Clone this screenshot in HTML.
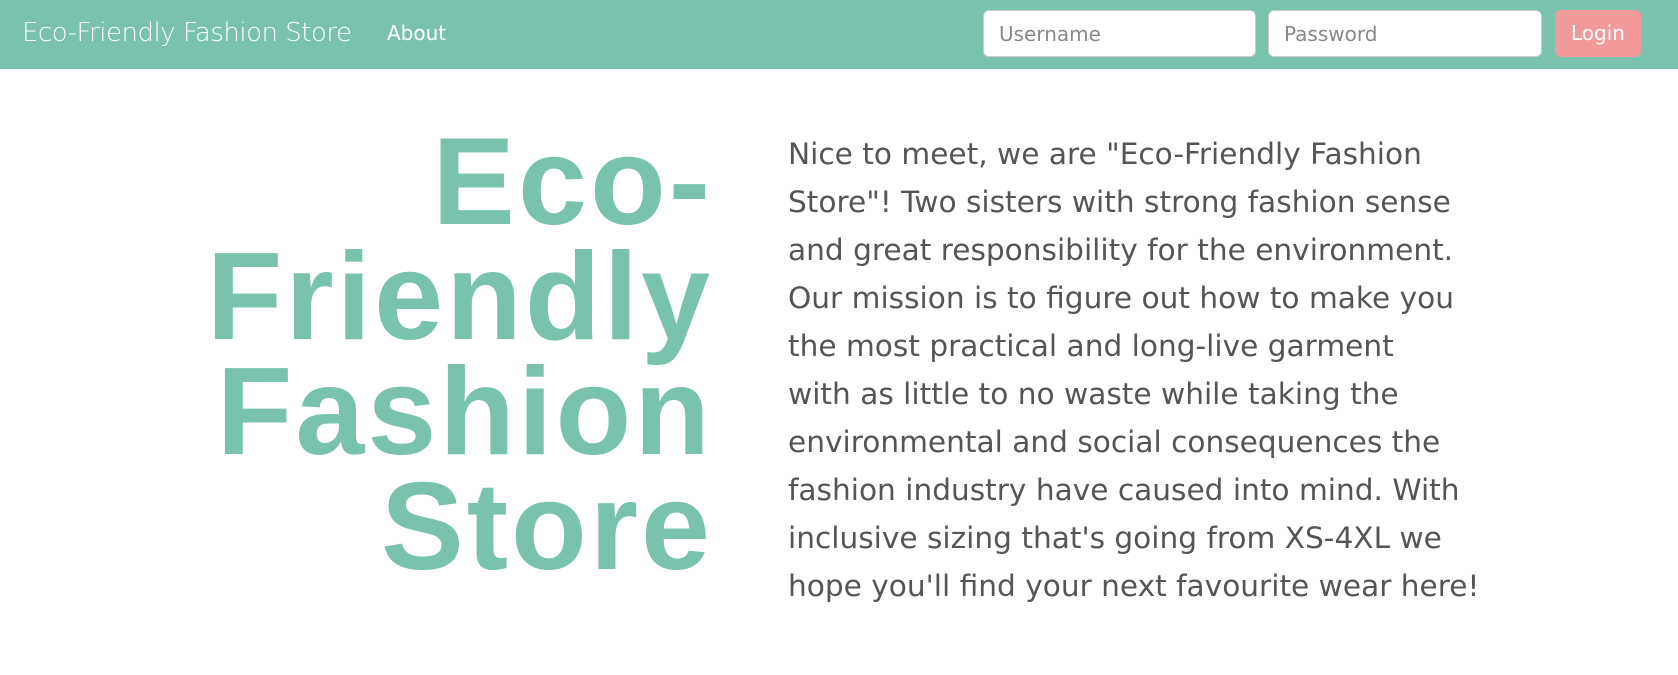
<!DOCTYPE html>
<html><head><meta charset="utf-8"><style>
body{margin:0;width:1678px;height:675px;background:#fff;position:relative;overflow:hidden;font-family:"DejaVu Sans","Liberation Sans",sans-serif}
.nav{position:absolute;left:0;top:0;width:1678px;height:69px;background:#79c2ad}
.brand{position:absolute;left:22px;top:18px;font-size:26px;color:#fff;font-family:"DejaVu Sans",sans-serif;font-weight:300;letter-spacing:-0.5px}
.about{position:absolute;left:387px;top:21px;font-size:20px;color:#fff}
.inp{position:absolute;top:10px;height:47px;background:#fff;border:1px solid #ccc;border-radius:6px;box-sizing:border-box;color:#888;font-size:20px;padding:11px 15px}
.login{position:absolute;left:1555px;top:10px;width:86px;height:47px;background:#f29a9a;border-radius:6px;color:#fff;font-size:20px;text-align:center;line-height:47px}
h1{position:absolute;right:965px;top:125px;margin:0;text-align:right;font-family:"Liberation Sans",sans-serif;font-weight:bold;font-size:124px;line-height:115px;color:#79c2ad;letter-spacing:3px}
p{position:absolute;left:788px;top:130px;margin:0;font-size:29.6px;line-height:48px;color:#555;white-space:nowrap;font-weight:normal}
</style></head><body>
<div class="nav">
<div class="brand">Eco-Friendly Fashion Store</div>
<div class="about">About</div>
<div class="inp" style="left:983px;width:273px">Username</div>
<div class="inp" style="left:1268px;width:274px">Password</div>
<div class="login">Login</div>
</div>
<h1>Eco-<br>Friendly<br>Fashion<br>Store</h1>
<p>Nice to meet, we are "Eco-Friendly Fashion<br>Store"! Two sisters with strong fashion sense<br>and great responsibility for the environment.<br>Our mission is to figure out how to make you<br>the most practical and long-live garment<br>with as little to no waste while taking the<br>environmental and social consequences the<br>fashion industry have caused into mind. With<br>inclusive sizing that's going from XS-4XL we<br>hope you'll find your next favourite wear here!</p>
</body></html>
